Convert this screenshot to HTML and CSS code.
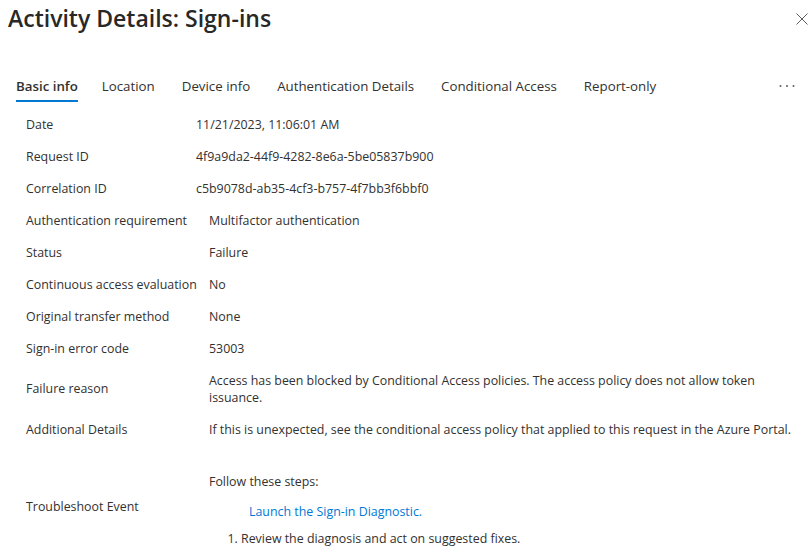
FILE: index.html
```html
<!DOCTYPE html>
<html lang="en">
<head>
    <meta charset="UTF-8">
    <title>Activity Details: Sign-ins</title>
    <link rel="stylesheet" href="styles.css">
</head>
<body>
    <div class="blade">
        <div class="blade-header">
            <h1>Activity Details: Sign-ins</h1>
            <button class="close-btn" aria-label="Close">
                <svg width="12" height="12" viewBox="0 0 12 12"><path d="M0.5 0.5 L11.5 11.5 M11.5 0.5 L0.5 11.5" stroke="#605e5c" stroke-width="1"/></svg>
            </button>
        </div>

        <div class="tabs">
            <span class="tab active">Basic info</span>
            <span class="tab">Location</span>
            <span class="tab">Device info</span>
            <span class="tab">Authentication Details</span>
            <span class="tab">Conditional Access</span>
            <span class="tab">Report-only</span>
            <span class="tab more" aria-label="More">
                <svg width="16" height="4" viewBox="0 0 16 4"><circle cx="1.5" cy="2" r="1" fill="#605e5c"/><circle cx="8" cy="2" r="1" fill="#605e5c"/><circle cx="14.5" cy="2" r="1" fill="#605e5c"/></svg>
            </span>
        </div>

        <div class="details details-ids">
            <div class="label">Date</div>
            <div class="value">11/21/2023, 11:06:01 AM</div>
            <div class="label">Request ID</div>
            <div class="value">4f9a9da2-44f9-4282-8e6a-5be05837b900</div>
            <div class="label">Correlation ID</div>
            <div class="value">c5b9078d-ab35-4cf3-b757-4f7bb3f6bbf0</div>
        </div>

        <div class="details details-main">
            <div class="label">Authentication requirement</div>
            <div class="value">Multifactor authentication</div>
            <div class="label">Status</div>
            <div class="value">Failure</div>
            <div class="label">Continuous access evaluation</div>
            <div class="value">No</div>
            <div class="label">Original transfer method</div>
            <div class="value">None</div>
            <div class="label">Sign-in error code</div>
            <div class="value">53003</div>
            <div class="label">Failure reason</div>
            <div class="value tall">Access has been blocked by Conditional Access policies. The access policy does not allow token issuance.</div>
            <div class="label">Additional Details</div>
            <div class="value">If this is unexpected, see the conditional access policy that applied to this request in the Azure Portal.</div>
            <div class="label">Troubleshoot Event</div>
            <div class="value steps">
                <p>Follow these steps:</p>
                <a href="#" class="diag-link">Launch the Sign-in Diagnostic.</a>
                <ol>
                    <li>Review the diagnosis and act on suggested fixes.</li>
                </ol>
            </div>
        </div>
    </div>
</body>
</html>
```

FILE: styles.css
```css
* {
    margin: 0;
    padding: 0;
    box-sizing: border-box;
}

body {
    font-family: 'Open Sans', 'Noto Sans', sans-serif;
    font-size: 12.4px;
    color: #323130;
    background: #fff;
    overflow: hidden;
}

.blade {
    width: 810px;
}

.blade-header {
    display: flex;
    justify-content: space-between;
    align-items: flex-start;
    padding: 2px 0 0 8px;
    height: 68px;
}

.blade-header h1 {
    font-size: 23px;
    font-weight: 600;
    line-height: 32px;
    color: #292827;
}

.close-btn {
    background: none;
    border: none;
    margin: 11px 2px 0 0;
    cursor: pointer;
}

.tabs {
    display: flex;
    align-items: center;
    gap: 27px;
    padding-left: 16px;
    height: 36px;
    font-size: 13.3px;
}

.tab {
    position: relative;
    line-height: 36px;
    color: #323130;
    white-space: nowrap;
}

.tab.active {
    font-weight: 600;
    margin-right: -3px;
}

.tab.active::after {
    content: "";
    position: absolute;
    left: 0;
    right: 0;
    bottom: 2px;
    height: 2px;
    background: #0078d4;
}

.tab.more {
    display: flex;
    align-items: center;
    height: 36px;
    margin-left: auto;
    margin-right: 15px;
}

.details {
    display: grid;
    padding-left: 26px;
    align-items: center;
}

.details-ids {
    grid-template-columns: 170px 1fr;
    margin-top: 4px;
}

.details-main {
    grid-template-columns: 183px 1fr;
}

.label,
.value {
    min-height: 32px;
    display: flex;
    align-items: center;
}

.value.tall {
    min-height: 49px;
    line-height: 17px;
    padding-right: 16px;
}

.steps {
    display: block;
    padding: 28px 0 20px;
    line-height: 17px;
}

.steps p {
    margin-bottom: 13px;
}

.diag-link {
    display: block;
    margin-left: 40px;
    color: #0078d4;
    text-decoration: none;
}

.steps ol {
    margin-top: 10px;
    padding-left: 32px;
}
```
